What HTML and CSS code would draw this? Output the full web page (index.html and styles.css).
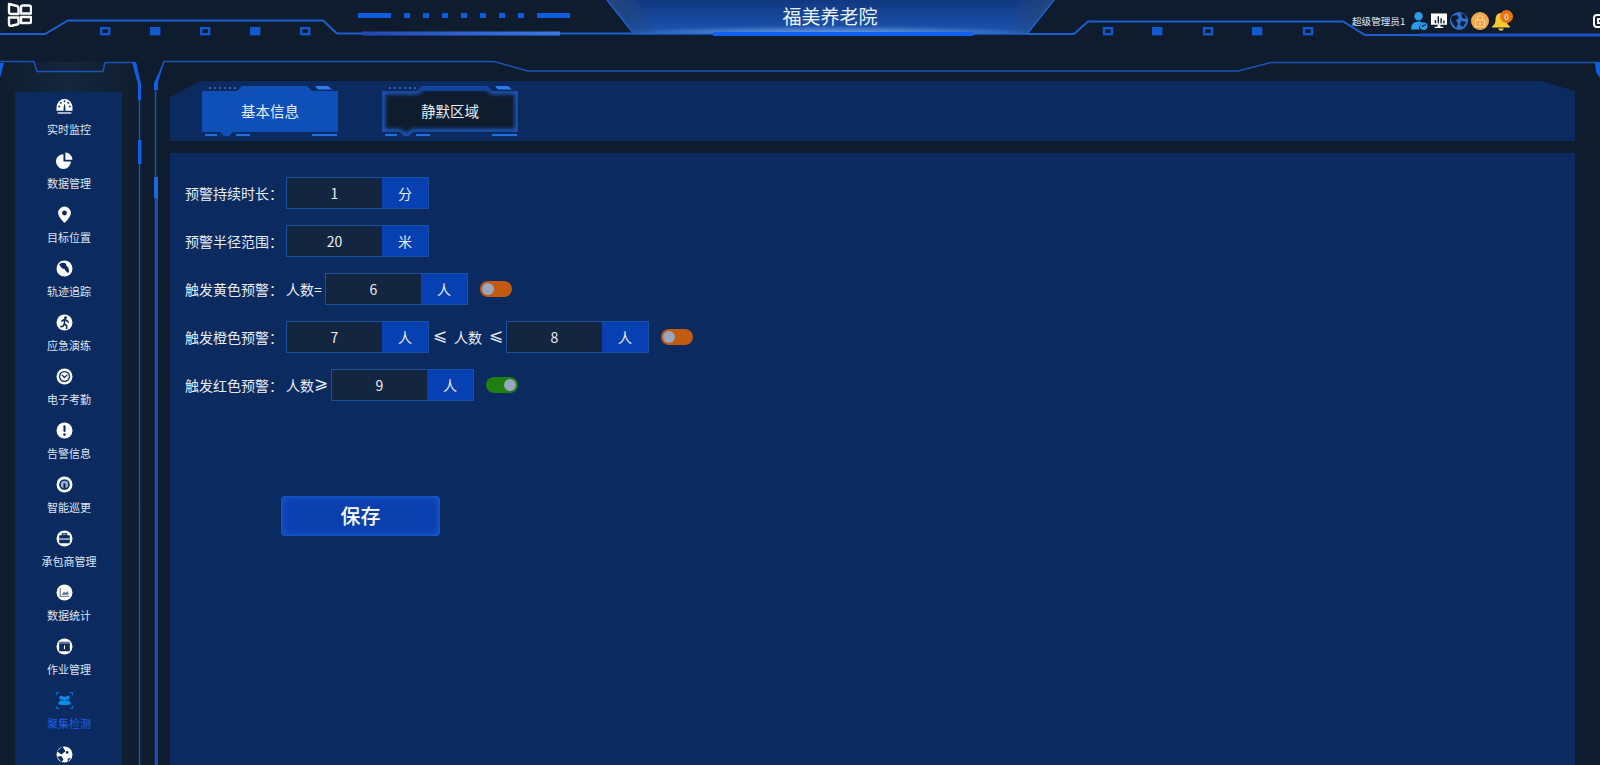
FILE: index.html
```html
<!DOCTYPE html>
<html lang="zh-CN">
  <head>
    <meta charset="UTF-8" />
    <title>福美养老院</title>
    <link rel="stylesheet" href="styles.css">
  </head>
  <body>
    <!-- frame lines behind everything -->
    <svg class="decor" width="1600" height="765" viewBox="0 0 1600 765">
      <defs>
        <linearGradient id="titleBg" x1="0" y1="0" x2="0" y2="1">
          <stop offset="0" stop-color="#113880" />
          <stop offset="1" stop-color="#1c56b4" />
        </linearGradient>
        <radialGradient id="titleGlow" cx="0.5" cy="1" r="0.5" gradientTransform="translate(0 0.5) scale(1 0.5)">
          <stop offset="0" stop-color="#7aa8e6" />
          <stop offset="1" stop-color="#7aa8e6" stop-opacity="0" />
        </radialGradient>
        <linearGradient id="stripeL" x1="0" y1="0" x2="1" y2="0">
          <stop offset="0" stop-color="#24477f" />
          <stop offset="1" stop-color="#24477f" stop-opacity="0" />
        </linearGradient>
        <linearGradient id="stripeR" x1="1" y1="0" x2="0" y2="0">
          <stop offset="0" stop-color="#24477f" />
          <stop offset="1" stop-color="#24477f" stop-opacity="0" />
        </linearGradient>
        <linearGradient id="thickL" x1="0" y1="0" x2="1" y2="0">
          <stop offset="0" stop-color="#2347b4" />
          <stop offset="1" stop-color="#3c7be4" />
        </linearGradient>
        <linearGradient id="sideGlow" x1="0" y1="0" x2="1" y2="0">
          <stop offset="0" stop-color="#0f1c2d" />
          <stop offset="0.5" stop-color="#15273d" />
          <stop offset="1" stop-color="#0f1c2d" />
        </linearGradient>
      </defs>

      <rect x="0" y="62" width="139" height="703" fill="url(#sideGlow)" />

      <!-- title plate -->
      <polygon points="607,0 1054,0 1027,34 634,34" fill="url(#titleBg)" />
      <polygon points="607,0 1054,0 1027,34 634,34" fill="url(#titleGlow)" />
      <polygon points="607,0 636,0 660,34 634,34" fill="url(#stripeL)" />
      <polygon points="1022,0 1054,0 1027,34 1003,34" fill="url(#stripeR)" />
      <path d="M607 0 L634 34 H1027 L1054 0" fill="none" stroke="#1d62d0" stroke-width="1.5" />
      <rect x="713" y="32" width="260" height="4" rx="1" fill="#0d63f0" />

      <!-- header lines -->
      <path d="M0 34 H45 L68 20.5 H323 L337 33.5 H634" fill="none" stroke="#1b5fd0" stroke-width="2" />
      <path d="M1027 34 H1074 L1088 21.5 H1343 L1365 35 H1600" fill="none" stroke="#1b5fd0" stroke-width="2" />
      <rect x="362" y="31.5" width="198" height="4" fill="url(#thickL)" />
      <rect x="1420" y="33.5" width="180" height="3" fill="#1f52c8" />

      <!-- ticks above the line -->
      <g fill="#0d5de0">
        <rect x="358" y="13" width="33" height="5" />
        <rect x="404" y="13" width="6" height="5" />
        <rect x="423" y="13" width="6" height="5" />
        <rect x="442" y="13" width="6" height="5" />
        <rect x="461" y="13" width="6" height="5" />
        <rect x="480" y="13" width="6" height="5" />
        <rect x="499" y="13" width="6" height="5" />
        <rect x="518" y="13" width="6" height="5" />
        <rect x="537" y="13" width="33" height="5" />
      </g>

      <!-- squares left / right -->
      <g fill="none" stroke="#1159cf" stroke-width="2.4">
        <rect x="101.2" y="28.2" width="8" height="6" />
        <rect x="201.2" y="28.2" width="8" height="6" />
        <rect x="301.2" y="28.2" width="8" height="6" />
        <rect x="1104" y="28.2" width="8" height="6" />
        <rect x="1204" y="28.2" width="8" height="6" />
        <rect x="1304" y="28.2" width="8" height="6" />
      </g>
      <g fill="#1159cf">
        <rect x="150" y="27" width="10.4" height="8.4" />
        <rect x="250" y="27" width="10.4" height="8.4" />
        <rect x="1152" y="27" width="10.4" height="8.4" />
        <rect x="1252" y="27" width="10.4" height="8.4" />
      </g>

      <!-- sidebar frame -->
      <path d="M0 61.5 H34 L37 71.5 H103 L105 62.5 H133 L139.5 86 V765" fill="none" stroke="#1a54b8" stroke-width="1.5" />
      <polygon points="132,62 136,62 141,84 141,100 138,100 138,84" fill="#0d5fe8" />
      <polygon points="0,63 4,63 0,78" fill="#0d5fe8" />
      <rect x="138" y="140" width="3.5" height="24" fill="#0d5fe8" />

      <!-- main frame -->
      <path d="M155.5 765 V83 L164 61.5 H494 L528 71 H1238 L1271 62.5 H1600" fill="none" stroke="#1a54b8" stroke-width="1.5" />
      <polygon points="164,62 154,83 154,90 158,90 158,82" fill="#0d5fe8" />
      <polygon points="1595,63 1600,63 1600,78 1596,72" fill="#0d5fe8" />
      <rect x="154" y="177" width="4" height="21" fill="#1b68e0" />
      <rect x="155.5" y="198" width="2.5" height="567" fill="#1a4fa8" />
    </svg>

    <header class="top-bar">
      <svg class="logo" width="25" height="25" viewBox="0 0 25 25" fill="none" stroke="#fff" stroke-width="2.4" stroke-linejoin="round">
        <path d="M2 2 L10 4 Q11.5 4.5 11.5 6 V12 H4 Q2 12 2 10 Z" />
        <path d="M14 5 Q14 3.5 16 3.5 H22 Q24 3.5 24 5.5 V11.5 H14 Z" />
        <path d="M2 15.5 H11.5 V21 Q11.5 22.5 10 22.5 L4 24 Q2 24 2 22 Z" />
        <path d="M14 15 H24 V20 Q24 21 22 21 H14 Z" />
      </svg>

      <h1 class="site-title">福美养老院</h1>

      <div class="user-box">
        <span class="user-name">超级管理员1</span>
        <svg class="user-icon" width="17" height="20" viewBox="0 0 18 20">
          <circle cx="8" cy="5" r="4.4" fill="#2a9be8" />
          <path d="M0 19 Q0 10.500 8 10.500 Q11 10.500 12.500 12 A5 5 0 0 0 9 19 Z" fill="#2a9be8" />
          <circle cx="13.500" cy="15.500" r="4" fill="#2a9be8" />
          <path d="M11.500 16 L13.300 14.800 L15.500 14" stroke="#0f1c2d" stroke-width="1.200" fill="none" />
        </svg>
        <svg class="user-icon" width="16" height="16" viewBox="0 0 17 16">
          <rect x="0" y="0" width="17" height="12" fill="#fff" />
          <rect x="4" y="7" width="1.500" height="3.500" fill="#0f1c2d" />
          <rect x="7" y="3" width="1.500" height="7.500" fill="#0f1c2d" />
          <rect x="10" y="5" width="1.500" height="5.500" fill="#0f1c2d" />
          <rect x="13" y="7.500" width="1.500" height="3" fill="#0f1c2d" />
          <path d="M7 12 H10 V14 H13 V15.500 H4 V14 H7 Z" fill="#fff" />
        </svg>
        <svg class="user-icon" width="18" height="18" viewBox="0 0 18 18">
          <circle cx="9" cy="9" r="9" fill="#2f6fd0" />
          <path d="M2 4 L7 3 L9 6 L6 8 L8 12 L6 16 L3 12 L1 8 Z" fill="#0f1c2d" />
          <path d="M11 1 L15 3 L16 7 L12 6 Z M11 9 L16 10 L13 15 L10 13 Z" fill="#0f1c2d" />
        </svg>
        <svg class="user-icon" width="18" height="18" viewBox="0 0 18 18">
          <circle cx="9" cy="9" r="9" fill="#f4a64a" />
          <path d="M6 8 V6.500 A3 3 0 0 1 12 6.500 V8" fill="none" stroke="#fbd9a8" stroke-width="1" />
          <rect x="4.500" y="8" width="9" height="6.500" rx="1" fill="none" stroke="#fbd9a8" stroke-width="1" />
          <rect x="8.500" y="10" width="1" height="2.500" fill="#fbd9a8" />
        </svg>
        <span class="bell">
          <svg width="18" height="19" viewBox="0 0 18 19">
            <path d="M9 1 Q14.500 1 14.500 8 Q14.500 12 18 14.500 V15.500 H0 V14.500 Q3.500 12 3.500 8 Q3.500 1 9 1 Z" fill="#f7c934" />
            <path d="M6 16.500 H12 Q11 18.800 9 18.800 Q7 18.800 6 16.500 Z" fill="#f7c934" />
          </svg>
          <span class="bell-count">0</span>
        </span>
      </div>

      <svg class="edge-icon" width="14" height="14" viewBox="0 0 14 14" fill="none" stroke="#fff" stroke-width="2">
        <rect x="1" y="1" width="12" height="12" rx="3" />
        <rect x="5" y="5" width="5" height="4" />
      </svg>
    </header>

    <div class="layout">
      <aside class="sidebar">
        <ul class="side-menu">
          <li class="side-item">
            <svg width="17" height="17" viewBox="0 0 16 16">
              <path d="M0.500 12 V8.500 A7.500 7.500 0 0 1 15.500 8.500 V12 Z" fill="#fff" />
              <rect x="1.500" y="13.500" width="13" height="1.200" fill="#fff" />
              <g fill="#0a2a60">
                <circle cx="8" cy="3" r="0.900" />
                <circle cx="4.500" cy="4.500" r="0.900" />
                <circle cx="11.500" cy="4.500" r="0.900" />
                <circle cx="3" cy="8" r="0.900" />
                <circle cx="13" cy="8" r="0.900" />
                <path d="M7 12 L7.500 6 H8.500 L9 12 Z" />
              </g>
            </svg>
            <span>实时监控</span>
          </li>
          <li class="side-item">
            <svg width="17" height="17" viewBox="0 0 16 16">
              <path d="M7 2 V9 H14 A7 7 0 1 1 7 2 Z" fill="#fff" />
              <path d="M8.800 0.500 A7 7 0 0 1 15.500 7.300 H8.800 Z" fill="#fff" />
            </svg>
            <span>数据管理</span>
          </li>
          <li class="side-item">
            <svg width="17" height="17" viewBox="0 0 16 16">
              <path fill-rule="evenodd" d="M8 0.500 A6 6 0 0 1 14 6.500 Q14 10 8 16 Q2 10 2 6.500 A6 6 0 0 1 8 0.500 Z M8 4.300 A2.300 2.300 0 1 0 8 8.900 A2.300 2.300 0 1 0 8 4.300 Z" fill="#fff" />
            </svg>
            <span>目标位置</span>
          </li>
          <li class="side-item">
            <svg width="17" height="17" viewBox="0 0 16 16">
              <circle cx="8" cy="8" r="7.500" fill="#fff" />
              <path d="M3 4 Q6 2 9 3 Q9.500 5.500 11.500 7 Q13 10 11.500 12.500 Q9 11 8 8.500 Q5 8.500 3 4 Z" fill="#0a2a60" />
            </svg>
            <span>轨迹追踪</span>
          </li>
          <li class="side-item">
            <svg width="17" height="17" viewBox="0 0 16 16">
              <circle cx="8" cy="8" r="7.500" fill="#fff" />
              <circle cx="9" cy="3.500" r="1.300" fill="#0a2a60" />
              <path d="M5 7 L8 5 L10.500 6.500 L12 8 M8 5.500 L8 9.500 L10 11 L10 14 M8 9.500 L6.500 11.500 L4 12" fill="none" stroke="#0a2a60" stroke-width="1.500" />
            </svg>
            <span>应急演练</span>
          </li>
          <li class="side-item">
            <svg width="17" height="17" viewBox="0 0 16 16">
              <circle cx="8" cy="8" r="7.500" fill="#fff" />
              <circle cx="8" cy="8" r="5.200" fill="#0a2a60" />
              <circle cx="8" cy="8" r="4" fill="#fff" />
              <path d="M5.500 6.500 L8 9 L10.500 6.500" fill="none" stroke="#0a2a60" stroke-width="1.200" />
            </svg>
            <span>电子考勤</span>
          </li>
          <li class="side-item">
            <svg width="17" height="17" viewBox="0 0 16 16">
              <circle cx="8" cy="8" r="7.500" fill="#fff" />
              <rect x="7" y="3" width="2" height="6.500" rx="1" fill="#0a2a60" />
              <circle cx="8" cy="11.700" r="1.200" fill="#0a2a60" />
            </svg>
            <span>告警信息</span>
          </li>
          <li class="side-item">
            <svg width="17" height="17" viewBox="0 0 16 16">
              <circle cx="8" cy="8" r="7.500" fill="#fff" />
              <circle cx="8" cy="8" r="5" fill="#0a2a60" />
              <circle cx="8" cy="8" r="3.500" fill="#9fb0cc" />
              <rect x="7" y="7" width="2" height="5.500" fill="#0a2a60" />
            </svg>
            <span>智能巡更</span>
          </li>
          <li class="side-item">
            <svg width="17" height="17" viewBox="0 0 16 16">
              <circle cx="8" cy="8" r="7.500" fill="#fff" />
              <rect x="3" y="5" width="10" height="7.500" rx="1" fill="#0a2a60" />
              <rect x="6" y="3.500" width="4" height="1.500" fill="none" stroke="#0a2a60" stroke-width="1" />
              <rect x="3" y="8" width="10" height="1" fill="#fff" />
            </svg>
            <span>承包商管理</span>
          </li>
          <li class="side-item">
            <svg width="17" height="17" viewBox="0 0 16 16">
              <circle cx="8" cy="8" r="7.500" fill="#fff" />
              <path d="M4 4 V11.500 H12.500" fill="none" stroke="#5a7196" stroke-width="1" />
              <path d="M5.500 10 L7.500 7 L9 8.500 L11 6.500 L12 10 Z" fill="#5a7196" />
            </svg>
            <span>数据统计</span>
          </li>
          <li class="side-item">
            <svg width="17" height="17" viewBox="0 0 16 16">
              <circle cx="8" cy="8" r="7.500" fill="#fff" />
              <rect x="3" y="3.500" width="10" height="9" rx="0.800" fill="#0a2a60" />
              <rect x="3" y="3.500" width="10" height="2" fill="#fff" opacity="0.350" />
              <rect x="7.500" y="7" width="1" height="3.500" fill="#fff" />
            </svg>
            <span>作业管理</span>
          </li>
          <li class="side-item is-active">
            <svg width="17" height="17" viewBox="0 0 16 16">
              <path d="M0.500 3 V0.500 H3 M13 0.500 H15.500 V3 M15.500 13 V15.500 H13 M3 15.500 H0.500 V13" fill="none" stroke="#0a7fe0" stroke-width="0.800" />
              <g fill="#0b8be8">
                <circle cx="5" cy="5.500" r="2" />
                <circle cx="11" cy="5.500" r="2" />
                <circle cx="8" cy="6.500" r="2" />
                <path d="M2 11.500 Q2.500 8 5 8 H11 Q13.500 8 14 11.500 Q8 13.500 2 11.500 Z" />
              </g>
            </svg>
            <span>聚集检测</span>
          </li>
          <li class="side-item">
            <svg width="17" height="17" viewBox="0 0 16 16">
              <circle cx="8" cy="8" r="7.500" fill="#fff" />
              <path d="M6 0.500 L9 5 L5 8 L1 5 Z M1 10 L5 9.500 L7 13 L5 15 Z M11 12 L14 11 L11 15 Z" fill="#0a2a60" />
              <circle cx="10.500" cy="6" r="1.300" fill="#0a2a60" />
            </svg>
          </li>
        </ul>
      </aside>

      <main class="main">
        <nav class="tab-bar">
          <a class="tab is-active">
            <svg class="tab-bg" width="136" height="52" viewBox="0 0 136 52">
              <path d="M0 5 H35 L40 0 H105 L110 5 H136 V46 H31 L27 50 H22 L18 46 H0 Z" fill="#0e4fb8" />
              <path d="M7 2 H37" stroke="#3f74c8" stroke-width="1.500" stroke-dasharray="2 3" />
              <polygon points="113,0 126,0 130,3.500 116,3.500" fill="#2f7bf0" />
              <g fill="#1f6fe0">
                <rect x="3" y="48" width="12" height="2" />
                <rect x="34" y="48" width="14" height="2" />
                <rect x="110" y="48" width="25" height="2" />
              </g>
            </svg>
            <span>基本信息</span>
          </a>
          <a class="tab">
            <svg class="tab-bg" width="136" height="52" viewBox="0 0 136 52">
              <defs>
                <clipPath id="tabClip">
                  <path d="M0 5 H35 L40 0 H105 L110 5 H136 V46 H31 L27 50 H22 L18 46 H0 Z" />
                </clipPath>
                <filter id="tabBlur"><feGaussianBlur stdDeviation="2" /></filter>
              </defs>
              <path d="M0 5 H35 L40 0 H105 L110 5 H136 V46 H31 L27 50 H22 L18 46 H0 Z" fill="#0f1c2d" />
              <g clip-path="url(#tabClip)">
                <path d="M0 5 H35 L40 0 H105 L110 5 H136 V46 H31 L27 50 H22 L18 46 H0 Z" fill="none" stroke="#1b5cc4" stroke-width="6" filter="url(#tabBlur)" />
                <path d="M36 0 H109 L112 5 H34 Z" fill="#10429a" />
              </g>
              <path d="M0.500 5.500 H35 L40 0.500 H105 L110 5.500 H135.500 V45.500 H31 L27 49.500 H22 L18 45.500 H0.500 Z" fill="none" stroke="#174a9e" />
              <path d="M7 2 H37" stroke="#3f74c8" stroke-width="1.500" stroke-dasharray="2 3" />
              <polygon points="113,0 126,0 130,3.500 116,3.500" fill="#2f7bf0" />
              <g fill="#1f6fe0">
                <rect x="3" y="48" width="12" height="2" />
                <rect x="34" y="48" width="14" height="2" />
                <rect x="110" y="48" width="25" height="2" />
              </g>
            </svg>
            <span>静默区域</span>
          </a>
        </nav>

        <section class="content">
          <div class="form-row">
            <label class="form-label">预警持续时长：</label>
            <div class="num-box"><input class="num-input" value="1" /><span class="num-unit">分</span></div>
          </div>
          <div class="form-row">
            <label class="form-label">预警半径范围：</label>
            <div class="num-box"><input class="num-input" value="20" /><span class="num-unit">米</span></div>
          </div>
          <div class="form-row">
            <label class="form-label">触发黄色预警：</label>
            <span class="form-text text-eq">人数=</span>
            <div class="num-box"><input class="num-input" value="6" /><span class="num-unit">人</span></div>
            <span class="toggle"></span>
          </div>
          <div class="form-row">
            <label class="form-label">触发橙色预警：</label>
            <div class="num-box"><input class="num-input" value="7" /><span class="num-unit">人</span></div>
            <div class="form-text text-range"><span class="cmp">⩽</span><span>人数</span><span class="cmp">⩽</span></div>
            <div class="num-box"><input class="num-input" value="8" /><span class="num-unit">人</span></div>
            <span class="toggle"></span>
          </div>
          <div class="form-row">
            <label class="form-label">触发红色预警：</label>
            <div class="form-text text-gte"><span>人数</span><span class="cmp">⩾</span></div>
            <div class="num-box"><input class="num-input" value="9" /><span class="num-unit">人</span></div>
            <span class="toggle is-on"></span>
          </div>
          <button class="save-btn">保存</button>
        </section>
      </main>
    </div>
  </body>
</html>
```

FILE: styles.css
```css
* {
  margin: 0;
  padding: 0;
  box-sizing: border-box;
}

body {
  position: relative;
  width: 1600px;
  height: 765px;
  overflow: hidden;
  background-color: #0f1c2d;
  color: #e8edf5;
  font-family: "Noto Sans CJK SC", "Noto Sans", sans-serif;
}

.decor {
  position: absolute;
  top: 0;
  left: 0;
}

/* header */
.top-bar {
  position: relative;
  display: flex;
  align-items: flex-start;
  height: 62px;
  padding-left: 7px;
}

.logo {
  margin-top: 2px;
  flex: none;
}

.site-title {
  width: 260px;
  margin-left: 668px;
  margin-top: 1px;
  font-size: 19px;
  font-weight: 400;
  line-height: 30px;
  text-align: center;
  color: #eef3fb;
}

.user-box {
  display: flex;
  align-items: center;
  gap: 3px;
  height: 20px;
  margin-left: 392px;
  margin-top: 11px;
}

.user-name {
  width: 56px;
  font-size: 9.600px;
  color: #e8edf5;
  white-space: nowrap;
}

.user-icon {
  flex: none;
}

.bell {
  position: relative;
  display: block;
  width: 18px;
  height: 19px;
}

.bell svg {
  display: block;
}

.bell-count {
  position: absolute;
  top: -2px;
  left: 8px;
  width: 13px;
  height: 13px;
  border-radius: 50%;
  background-color: #e8750f;
  color: #fff;
  font-size: 8px;
  line-height: 13px;
  text-align: center;
}

.edge-icon {
  margin-left: auto;
  margin-top: 14px;
  margin-right: -7px;
}

/* page body */
.layout {
  position: relative;
  display: flex;
  height: 703px;
}

.sidebar {
  width: 107px;
  margin-left: 15px;
  margin-top: 30px;
  flex: none;
  background-color: #0a2a60;
  overflow: hidden;
}

.side-menu {
  list-style: none;
  padding-top: 6px;
}

.side-item {
  position: relative;
  height: 54px;
  padding-left: 41px;
  font-size: 11px;
  line-height: 16px;
}

.side-item svg {
  display: block;
  height: 17px;
  margin-bottom: 6px;
}

.side-item span {
  display: block;
  width: 60px;
  margin-left: -17px;
  text-align: center;
  white-space: nowrap;
  color: #dfe6f1;
}

.side-item.is-active span {
  color: #1f5fe4;
}

.main {
  width: 1405px;
  margin-left: 48px;
  margin-top: 19px;
  flex: none;
  display: flex;
  flex-direction: column;
  gap: 12px;
}

.tab-bar {
  display: flex;
  gap: 44px;
  height: 60px;
  padding: 5px 0 0 32px;
  background-color: #0a2a60;
  clip-path: polygon(30px 0, 1371px 0, 1405px 10px, 1405px 100%, 0 100%, 0 16px);
}

.tab {
  position: relative;
  display: flex;
  align-items: center;
  justify-content: center;
  width: 136px;
  height: 52px;
  padding-bottom: 4px;
  font-size: 14.500px;
  color: #e8edf5;
  cursor: pointer;
}

.tab-bg {
  position: absolute;
  top: 0;
  left: 0;
}

.tab span {
  position: relative;
}

.content {
  flex: 1;
  padding: 23.500px 0 0 15px;
  background-color: #0a2a60;
}

/* form rows */
.form-row {
  display: flex;
  align-items: center;
  height: 32px;
  margin-bottom: 16px;
  font-size: 14px;
  color: #e8edf5;
}

.form-label {
  width: 101px;
  flex: none;
  white-space: nowrap;
}

.form-text {
  display: flex;
  align-items: center;
  white-space: nowrap;
}

.cmp {
  width: 14px;
  padding-bottom: 5px;
  font-size: 17px;
  line-height: 20px;
  text-align: center;
}

.text-eq {
  width: 39px;
}

.text-gte {
  width: 45px;
}

.text-range {
  width: 77px;
  gap: 7px;
  padding-left: 4px;
}

.num-box {
  display: flex;
  width: 143px;
  height: 32px;
  flex: none;
  border: 1px solid #1e4f9f;
}

.num-input {
  width: 95px;
  height: 100%;
  border: none;
  outline: none;
  background-color: #14263f;
  color: #e8edf5;
  font-family: inherit;
  font-size: 14px;
  text-align: center;
}

.num-unit {
  flex: 1;
  line-height: 30px;
  text-align: center;
  background-color: #0640b2;
  color: #e8edf5;
}

.toggle {
  position: relative;
  width: 32px;
  height: 16px;
  margin-left: 12px;
  border-radius: 8px;
  background-color: #c25a10;
}

.toggle::before {
  content: "";
  position: absolute;
  top: 2px;
  left: 2px;
  width: 12px;
  height: 12px;
  border-radius: 50%;
  background-color: #9aa5bf;
}

.toggle.is-on {
  background-color: #1f7f10;
}

.toggle.is-on::before {
  left: 18px;
}

.save-btn {
  display: block;
  width: 159px;
  height: 40px;
  margin: 95px 0 0 96px;
  border: 1px solid #1454c8;
  border-radius: 3px;
  background-color: #0a3fae;
  box-shadow: inset 0 0 8px #1a5ad0;
  color: #fff;
  font-family: inherit;
  font-size: 20px;
  font-weight: 500;
  cursor: pointer;
}
```
